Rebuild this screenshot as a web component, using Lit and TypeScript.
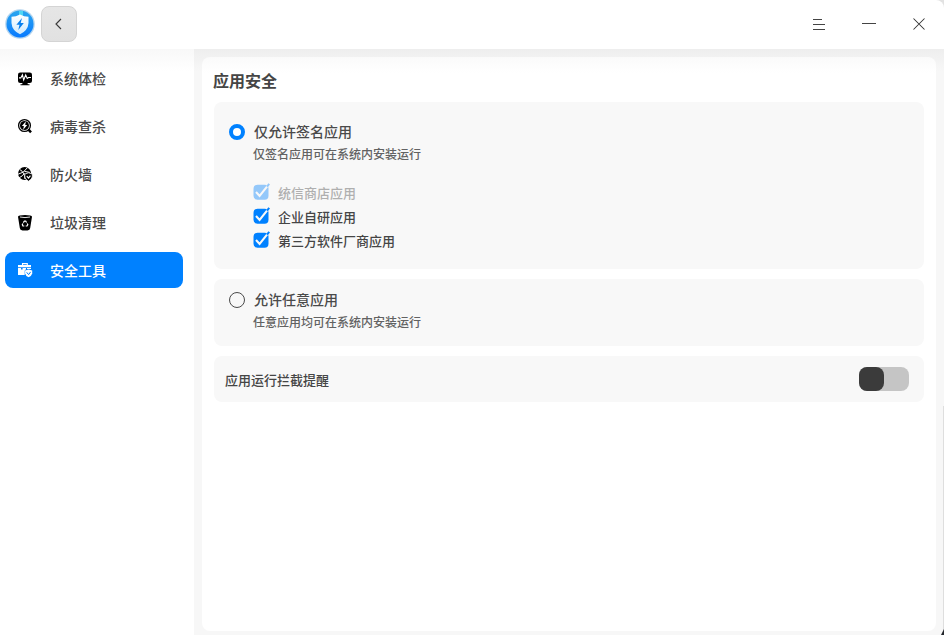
import { LitElement, html, css, svg } from "lit";
import { customElement, property, state } from "lit/decorators.js";
import { classMap } from "lit/directives/class-map.js";

const icons = {
  check: svg`<path d="M2.200 1.500h9.600Q14 1.500 14 3.500v6.500q0 2-2.200 2H2.200Q0 12 0 10V3.500q0-2 2.200-2z" fill="currentColor"/>
    <path d="M4.500 12h5l.3 1.300h1.700v1h-9v-1h1.700z" fill="currentColor"/>
    <path d="M1 6.900h1.800L4.400 3.800l1.300 5.200 2-5 1.500 3.500 1.300-1h2.500" fill="none" stroke="#fff" stroke-width="1.100"/>`,
  virus: svg`<circle cx="6.500" cy="6.500" r="5.900" fill="none" stroke="currentColor" stroke-width="1.300"/>
    <circle cx="6.500" cy="6.500" r="4.500" fill="currentColor"/>
    <path d="M7.900 2.200 3.900 7h2l-.8 3.900L9.200 6H7.200z" fill="#fff"/>
    <path d="m10.300 10.300 2.700 3" stroke="currentColor" stroke-width="2.500"/>`,
  wall: svg`<circle cx="6.600" cy="6.500" r="6.500" fill="currentColor"/>
    <path d="M0 7.200Q5.500 6.500 9.500 .6M2 2.700Q6.500 5 7 12M1.200 10.800Q5 9 6.500 6M6.500 4.400l5.300 1" fill="none" stroke="#fff" stroke-width="1"/>
    <path d="m10.500 5.800 3.800 1.200v3q-.7 2.700-3.800 4.200-3.100-1.500-3.700-4.200V7z" fill="currentColor" stroke="#fff" stroke-width=".8"/>
    <path d="m8.800 9.100 1.700 2 1.900-2.400" fill="none" stroke="#fff" stroke-width="1.200"/>`,
  trash: svg`<path d="M0 1.800Q0 0 7 0t7 1.800L12.200 13Q12 15.400 9.500 15.400h-5Q2 15.400 1.800 13z" fill="currentColor"/>
    <path d="M2 2Q7 3.200 12 2" fill="none" stroke="#fff" stroke-width=".9"/>
    <path d="M5.300 7.700 6.400 6.200h1.300l.9 1.300M9.200 8.400l.6 1.300-.8 1.300H7.700M6.300 11H4.900l-.6-1.200.6-1.200" fill="none" stroke="#fff" stroke-width="1.200"/>`,
  tools: svg`<path d="M4.500 2.500V.6h4.800v1.900" fill="none" stroke="currentColor" stroke-width="1.100"/>
    <path d="M0 2h13v2.300H0zM0 5h3v1.500h1.600V5H8v1.300L6.700 7.500V12H0zM9 5h4v1H9z" fill="currentColor"/>
    <path d="m10.600 6.500 3.600 1.100v2.800q-.6 2.400-3.600 3.900-3-1.500-3.500-3.900V7.600z" fill="currentColor"/>
    <path d="m8.700 9.300 1.900 2.300 2-2.700" fill="none" stroke="#0081ff" stroke-width="1"/>`,
};

type IconName = keyof typeof icons;

const navItems: { icon: IconName; label: string }[] = [
  { icon: "check", label: "系统体检" },
  { icon: "virus", label: "病毒查杀" },
  { icon: "wall", label: "防火墙" },
  { icon: "trash", label: "垃圾清理" },
  { icon: "tools", label: "安全工具" },
];

@customElement("title-bar")
export class TitleBar extends LitElement {
  static styles = css`
    :host { display: flex; align-items: center; height: 49px; flex: none; background: #fff; padding-left: 5px; box-sizing: border-box; border-top-right-radius: 8px; }
    svg { display: block; }
    .logo { margin: 0 6px 1px 0; }
    .back { width: 36px; height: 36px; box-sizing: border-box; border: 1px solid #d4d4d4; border-radius: 8px; background: linear-gradient(#e6e6e6, #e1e1e1); display: grid; place-items: center; padding: 0; margin-bottom: 1px; }
    .controls { display: flex; margin-left: auto; }
    .controls span { width: 50px; height: 49px; display: grid; place-items: center; }
    .close { margin-bottom: 2px; }
  `;

  render() {
    return html`
      <svg class="logo" width="30" height="30" viewBox="0 0 30 30">
        <defs>
          <linearGradient id="disc" x2="0" y2="1"><stop stop-color="#2ba6ee"/><stop offset="1" stop-color="#087aff"/></linearGradient>
          <linearGradient id="shield" x2="0" y2="1"><stop stop-color="#fff"/><stop offset="1" stop-color="#cfeafd"/></linearGradient>
        </defs>
        <circle cx="15" cy="15" r="14.800" fill="#b4d5ef"/>
        <circle cx="15" cy="15" r="13.500" fill="url(#disc)"/>
        <path d="M14 2h4v5h-4z" fill="#4fd6f4"/>
        <path d="M15 5.500Q19 7.800 23.500 7.800V14q-.5 7.500-8.500 11.300Q7 21.500 6.500 14V7.800q4.500 0 8.500-2.300z" fill="url(#shield)"/>
        <path d="m17 9-5.600 6.800h3.100l-1.200 5.200 5.500-7h-3.100z" fill="#087fee"/>
      </svg>
      <button class="back" aria-label="返回">
        <svg width="8" height="12" viewBox="0 0 8 12"><path d="M6 1 1 6l5 5" fill="none" stroke="#3a3a3a" stroke-width="1.150"/></svg>
      </button>
      <div class="controls">
        <span><svg width="12" height="12" viewBox="0 0 12 12"><path d="M0 .5h9M0 5.500h12M0 10.500h12" stroke="#444"/></svg></span>
        <span><svg width="14" height="3" viewBox="0 0 14 3"><path d="M0 .5h14" stroke="#444"/></svg></span>
        <span><svg class="close" width="12" height="12" viewBox="0 0 12 12"><path d="m.5.500 11 11m0-11-11 11" stroke="#333" stroke-width="1.050"/></svg></span>
      </div>
    `;
  }
}

@customElement("side-nav")
export class SideNav extends LitElement {
  @state() private current = 4;

  static styles = css`
    :host { display: flex; flex-direction: column; gap: 12px; width: 194px; flex: none; box-sizing: border-box; padding: 11px 11px 0 5px; background: linear-gradient(#f8f8f8, #fff 22px); }
    .item { display: flex; align-items: center; height: 36px; padding-left: 13px; border-radius: 8px; color: #4a4a4a; font-size: 14px; line-height: 20px; }
    .item svg { color: #000; width: 14px; height: 15px; margin-right: 18px; flex: none; overflow: visible; }
    .active, .item.active svg { color: #fff; }
    .active { background: #0081ff; }
    .label { padding-bottom: 1px; }
  `;

  render() {
    return navItems.map(
      (item, i) => html`
        <div class=${classMap({ item: true, active: i === this.current })} @click=${() => (this.current = i)}>
          <svg viewBox="0 0 14 15">${icons[item.icon]}</svg>
          <span class="label">${item.label}</span>
        </div>
      `,
    );
  }
}

@customElement("radio-option")
export class RadioOption extends LitElement {
  @property() label = "";
  @property() hint = "";
  @property({ type: Boolean }) checked = false;

  static styles = css`
    :host { display: grid; grid-template-columns: 16px 1fr; column-gap: 9px; align-items: center; }
    .dot { width: 16px; height: 16px; box-sizing: border-box; border-radius: 50%; border: 1px solid #4a4a4a; }
    .on { border: 4px solid #0081ff; background: #fff; }
    .label { font-size: 14px; line-height: 20px; padding-bottom: 2px; color: #4a4a4a; }
    .hint { grid-column: 2; font-size: 12px; line-height: 20px; padding-top: 1px; color: #626262; margin-left: -1px; }
  `;

  render() {
    return html`
      <span class=${classMap({ dot: true, on: this.checked })}></span>
      <span class="label">${this.label}</span>
      <span class="hint">${this.hint}</span>
    `;
  }
}

@customElement("check-option")
export class CheckOption extends LitElement {
  @property() label = "";
  @property({ type: Boolean, reflect: true }) disabled = false;

  static styles = css`
    :host { display: flex; align-items: center; height: 24px; font-size: 13px; line-height: 20px; color: #454545; }
    :host([disabled]) { opacity: 0.4; }
    svg { display: block; width: 17px; height: 17px; margin-right: 8px; margin-bottom: 3px; }
  `;

  render() {
    return html`
      <svg viewBox="0 0 17 17">
        <rect x=".5" y="1.700" width="15" height="15" rx="4" fill="#0081ff"/>
        <path d="m3 9 3.600 4L15.600 1.700" fill="none" stroke="#f8f8f8" stroke-width="2.100"/>
        <path d="m14 3.600 2.200-2.800" stroke="#0081ff" stroke-width="2"/>
      </svg>
      <span>${this.label}</span>
    `;
  }
}

@customElement("app-root")
export class AppRoot extends LitElement {
  static styles = css`
    :host { display: flex; flex-direction: column; height: 635px; overflow: hidden; position: relative; background: #e2e2e2; font-family: "Noto Sans CJK SC", sans-serif; font-weight: 500; color: #454545; }
    .body { display: flex; flex: 1; min-height: 0; }
    .content { flex: 1; min-width: 0; box-sizing: border-box; padding: 8px 8px 4px; background: linear-gradient(#eee, #f7f7f7 22px); }
    .panel { height: 100%; box-sizing: border-box; padding: 11px 12px 0; border-radius: 8px; background: linear-gradient(#fafafa, #fff 16px); }
    h1 { margin: 0 0 10px -1px; font-size: 16px; line-height: 24px; font-weight: 700; color: #454545; }
    .cards { display: flex; flex-direction: column; gap: 10px; }
    .card { box-sizing: border-box; border-radius: 8px; background: #f8f8f8; }
    .signed { height: 167px; padding: 19px 15px 0; }
    .any { height: 67px; padding: 10px 15px 0; }
    .notice { height: 46px; padding: 0 15px 0 11px; display: flex; align-items: center; justify-content: space-between; font-size: 13px; line-height: 20px; }
    .notice span { padding-top: 1px; }
    .checks { padding: 17px 0 0 24px; }
    .switch { width: 50px; height: 24px; border-radius: 8px; background: #c5c5c5; }
    .knob { width: 25px; height: 24px; border-radius: 8px; background: #3b3b3b; }
    .edge { position: absolute; right: 0; bottom: 0; width: 1px; height: 229px; background: #dedede; }
    .corner { position: absolute; right: 0; bottom: 0; width: 3px; height: 6px; background: #23262b; clip-path: polygon(100% 0, 100% 100%, 0 100%); }
  `;

  render() {
    return html`
      <title-bar></title-bar>
      <div class="body">
        <side-nav></side-nav>
        <main class="content">
          <div class="panel">
            <h1>应用安全</h1>
            <div class="cards">
              <section class="card signed">
                <radio-option checked label="仅允许签名应用" hint="仅签名应用可在系统内安装运行"></radio-option>
                <div class="checks">
                  <check-option disabled label="统信商店应用"></check-option>
                  <check-option label="企业自研应用"></check-option>
                  <check-option label="第三方软件厂商应用"></check-option>
                </div>
              </section>
              <section class="card any">
                <radio-option label="允许任意应用" hint="任意应用均可在系统内安装运行"></radio-option>
              </section>
              <section class="card notice">
                <span>应用运行拦截提醒</span>
                <div class="switch"><div class="knob"></div></div>
              </section>
            </div>
          </div>
        </main>
      </div>
      <div class="edge"></div>
      <div class="corner"></div>
    `;
  }
}
